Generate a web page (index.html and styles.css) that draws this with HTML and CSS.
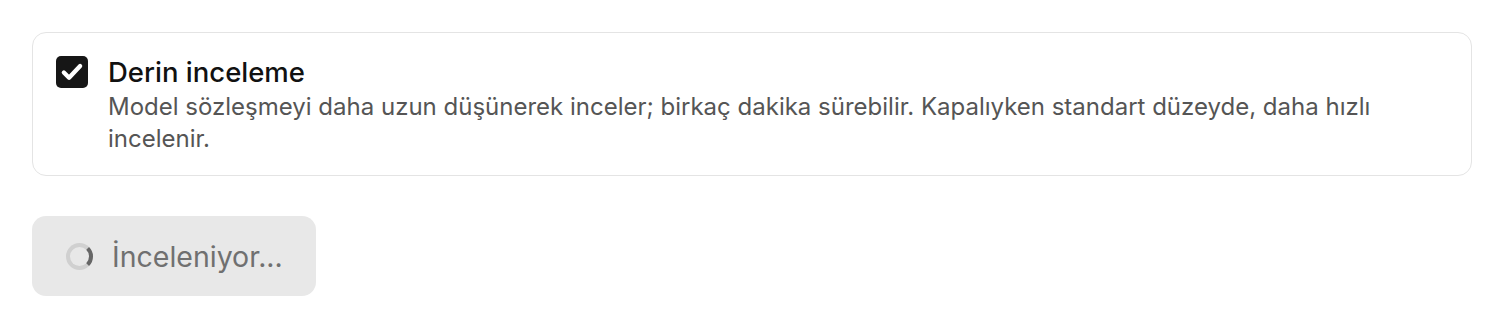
FILE: index.html
```html
<!DOCTYPE html>
<html lang="tr">

<head>
    <meta charset="UTF-8">
    <meta name="viewport" content="width=device-width, initial-scale=1.0">
    <title>Derin inceleme</title>
    <link rel="stylesheet" href="styles.css">
</head>

<body>
    <div class="page">
        <label class="option">
            <span class="check">
                <svg width="26" height="26" viewBox="0 0 24 24">
                    <path d="M4.5 12.5l4.8 4.8L19.5 6.5" fill="none" stroke="#fff" stroke-width="4" stroke-linecap="round" stroke-linejoin="round" />
                </svg>
            </span>
            <span class="text">
                <span class="title">Derin inceleme</span>
                <span class="desc">Model sözleşmeyi daha uzun düşünerek inceler; birkaç dakika sürebilir. Kapalıyken standart düzeyde, daha hızlı incelenir.</span>
            </span>
        </label>

        <div class="actions">
            <button class="btn" disabled>
                <span class="spinner"></span>
                <span>İnceleniyor...</span>
            </button>
        </div>
    </div>
</body>

</html>
```

FILE: styles.css
```css
* {
    margin: 0;
    padding: 0;
    box-sizing: border-box;
}

body {
    background: #fff;
    font-family: Inter, "Noto Sans", sans-serif;
    color: #111;
}

.page {
    padding: 32px;
    display: flex;
    flex-direction: column;
    gap: 40px;
}

.option {
    display: flex;
    gap: 20px;
    padding: 23px 23px 20px 23px;
    border: 1.5px solid #e4e4e4;
    border-radius: 14px;
}

.check {
    flex: none;
    width: 32px;
    height: 32px;
    background: #161616;
    border-radius: 5px;
    display: flex;
    align-items: center;
    justify-content: center;
}

.text {
    display: flex;
    flex-direction: column;
}

.title {
    font-size: 27.5px;
    line-height: 32px;
    font-weight: 500;
    color: #111;
}

.desc {
    margin-top: 3px;
    font-size: 24px;
    line-height: 32px;
    color: #555;
}

.actions {
    display: flex;
}

.btn {
    display: flex;
    align-items: center;
    gap: 19px;
    height: 80px;
    padding: 0 33px 0 34px;
    background: #e8e8e8;
    border: none;
    border-radius: 14px;
    font-family: inherit;
    font-size: 28.5px;
    color: #707070;
}

.spinner {
    width: 27px;
    height: 27px;
    border: 4px solid #d0d0d0;
    border-right-color: #666;
    border-radius: 50%;
}
```
